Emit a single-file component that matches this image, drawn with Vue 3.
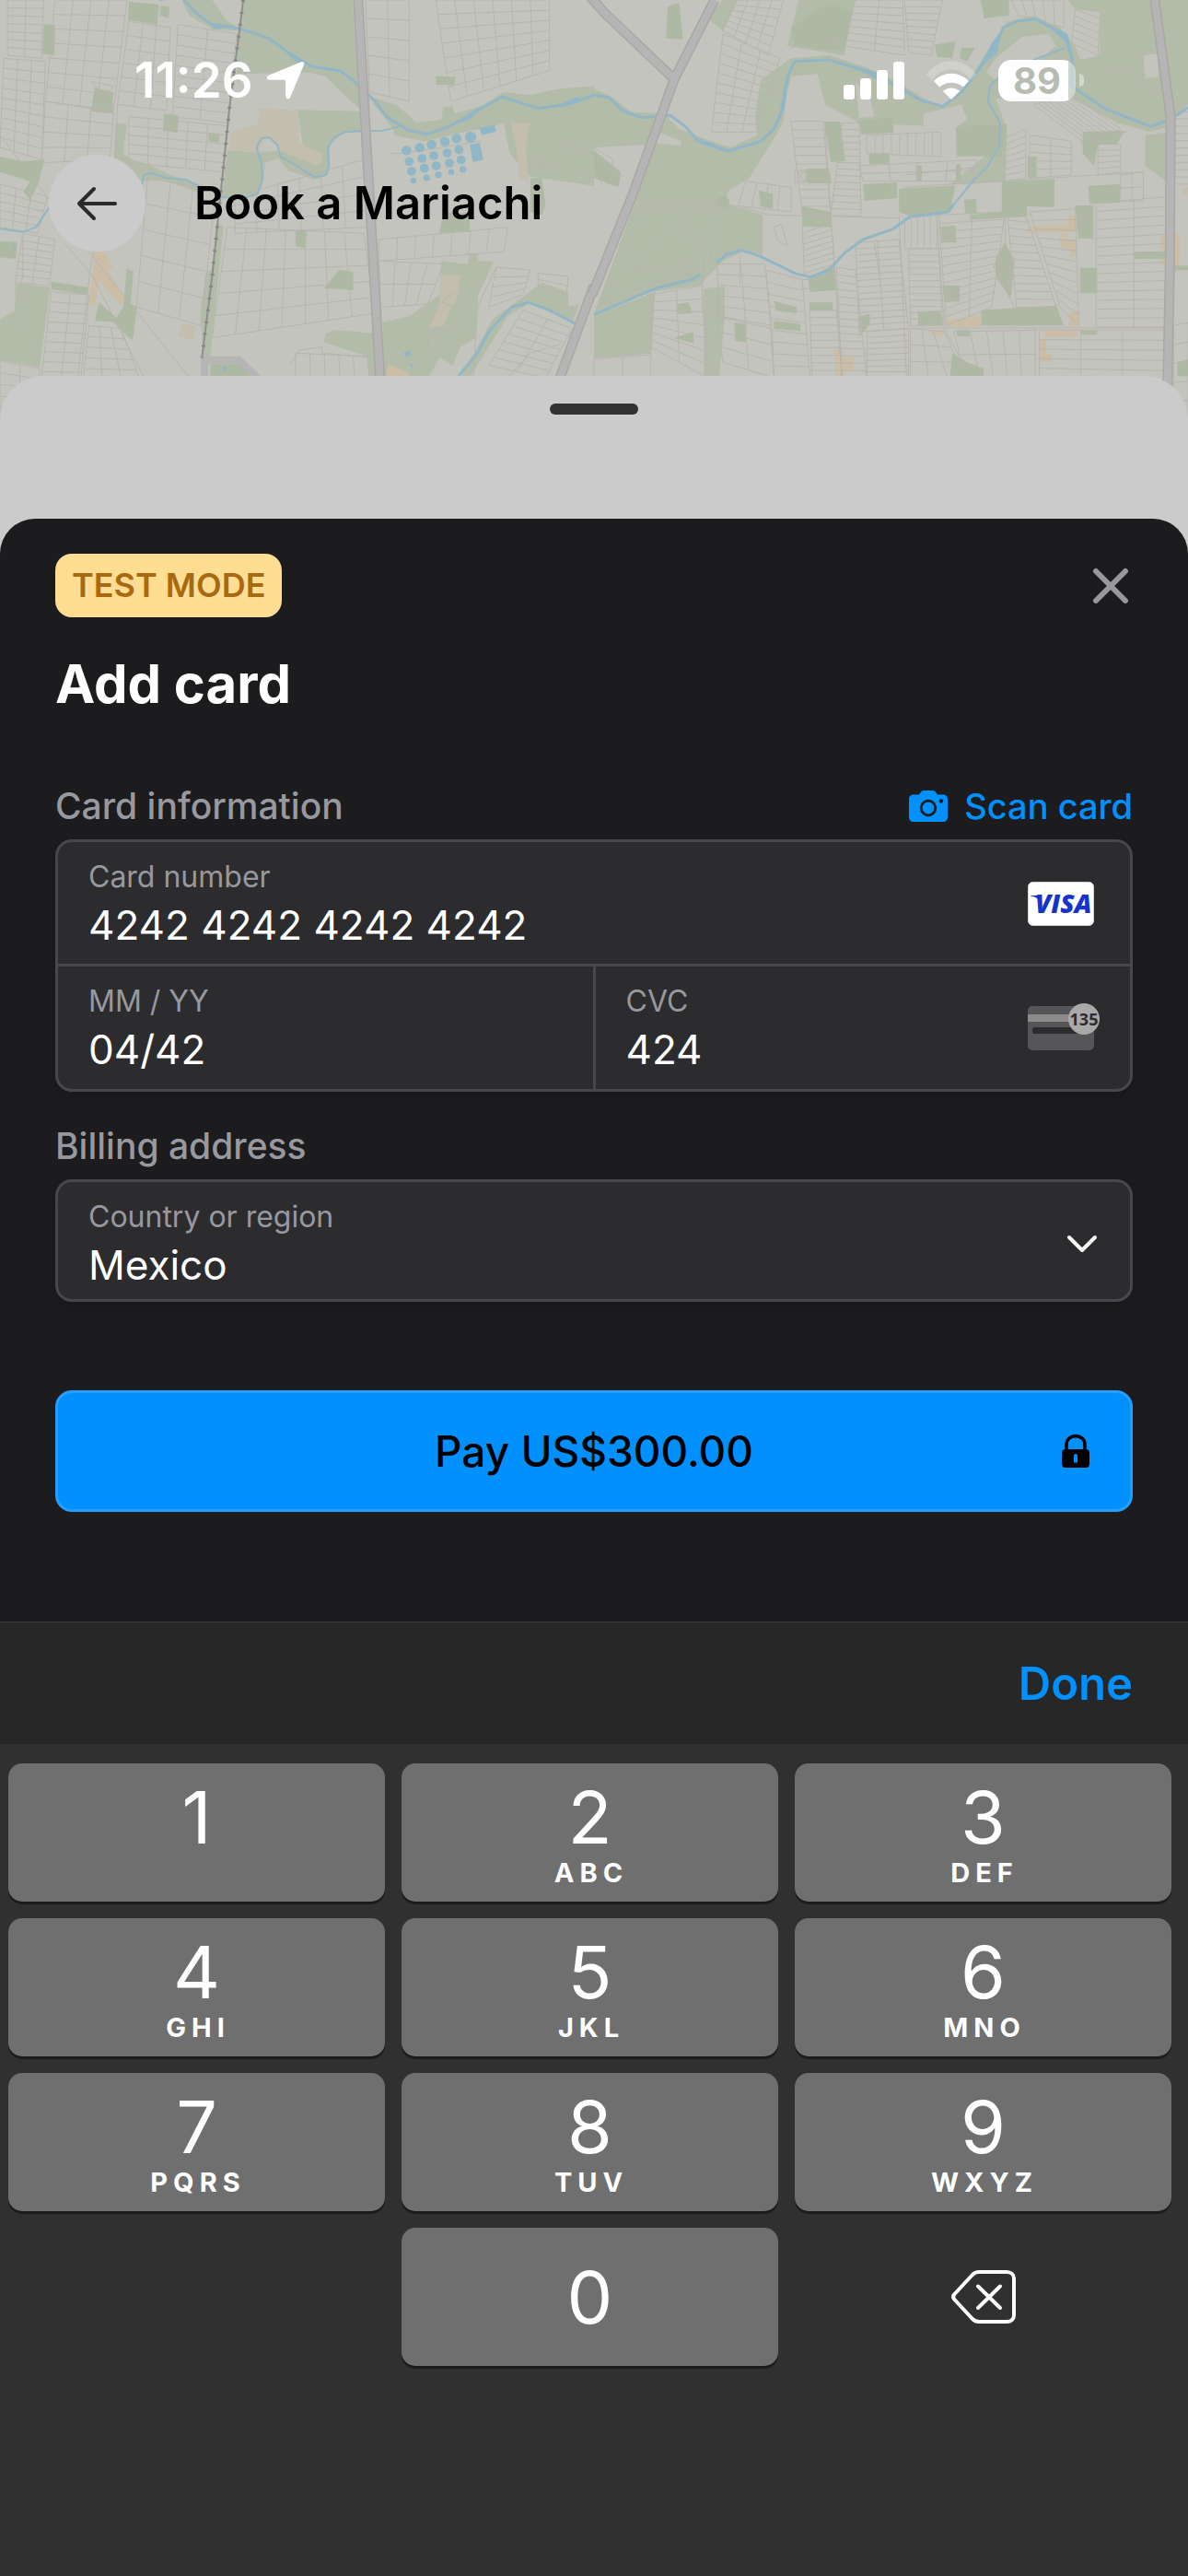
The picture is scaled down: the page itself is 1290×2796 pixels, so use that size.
<script setup>
import { ref } from 'vue'

const cardNumber = ref('4242 4242 4242 4242')
const expiry = ref('04/42')
const cvc = ref('424')
const country = ref('Mexico')

const keys = [
  { digit: '1', letters: '' },
  { digit: '2', letters: 'ABC' },
  { digit: '3', letters: 'DEF' },
  { digit: '4', letters: 'GHI' },
  { digit: '5', letters: 'JKL' },
  { digit: '6', letters: 'MNO' },
  { digit: '7', letters: 'PQRS' },
  { digit: '8', letters: 'TUV' },
  { digit: '9', letters: 'WXYZ' },
]

// Street grid of one district: corners [tl, tr, br, bl], columns, rows.
function grid([a, b, c, d], cols, rows) {
  const mix = (p, q, t) => [Math.round(p[0] + (q[0] - p[0]) * t), Math.round(p[1] + (q[1] - p[1]) * t)]
  let path = ''
  for (let i = 0; i <= cols; i++) {
    const t = cols ? i / cols : 0
    path += `M${mix(a, b, t)}L${mix(d, c, t)}`
  }
  for (let j = 0; j <= rows; j++) {
    path += `M${mix(a, d, j / rows)}L${mix(b, c, j / rows)}`
  }
  return path
}

const westStreets = [
  grid([[20, 0], [115, 0], [110, 190], [20, 180]], 2, 7),
  grid([[145, 0], [335, 0], [300, 360], [120, 330]], 4, 7),
  grid([[340, 70], [450, 90], [440, 360], [310, 340]], 3, 6),
  grid([[470, 80], [625, 110], [600, 400], [455, 380]], 2, 9),
  grid([[10, 190], [120, 200], [110, 520], [0, 480]], 3, 9),
  grid([[120, 330], [300, 365], [290, 520], [110, 530]], 3, 4),
  grid([[340, 380], [600, 410], [590, 560], [340, 530]], 5, 5),
  grid([[0, 600], [125, 640], [100, 760], [0, 740]], 3, 5),
  grid([[60, 760], [145, 780], [130, 930], [40, 920]], 2, 7),
  grid([[390, 580], [570, 620], [530, 1060], [360, 1000]], 3, 5),
  grid([[600, 740], [960, 760], [990, 1020], [560, 1100]], 7, 5),
  grid([[620, 640], [960, 520], [970, 740], [620, 760]], 6, 4),
  grid([[135, 950], [235, 960], [205, 1340], [100, 1340]], 2, 12),
  grid([[235, 1060], [320, 1070], [400, 1340], [210, 1340]], 3, 8),
  grid([[0, 1175], [105, 1200], [100, 1368], [0, 1368]], 2, 5),
  grid([[780, 1150], [970, 1160], [975, 1230], [780, 1230]], 5, 1),
  grid([[965, 0], [1080, 0], [1080, 330], [975, 300]], 2, 5),
  grid([[1150, 0], [1450, 0], [1450, 230], [1190, 330]], 6, 7),
  grid([[1000, 780], [1340, 740], [1330, 820], [1000, 850]], 7, 1),
  grid([[1000, 850], [1170, 860], [1130, 990], [1005, 1000]], 4, 2),
  grid([[1310, 870], [1400, 880], [1380, 960], [1290, 1000]], 1, 4),
  grid([[1420, 890], [1500, 900], [1495, 960], [1420, 930]], 1, 2),
  grid([[1380, 1010], [1510, 1070], [1440, 1230], [1290, 1190]], 2, 7),
].join('')

const eastStreets = [
  grid([[375, 0], [500, 0], [460, 180], [340, 100]], 4, 6),
  grid([[340, 110], [490, 190], [430, 430], [310, 430]], 3, 10),
  grid([[690, 0], [815, 0], [820, 180], [660, 150]], 2, 7),
  grid([[820, 0], [920, 0], [890, 180], [830, 170]], 1, 8),
  grid([[1100, 0], [1240, 0], [1240, 90], [1120, 50]], 5, 1),
  grid([[1270, 30], [1335, 60], [1330, 180], [1260, 140]], 1, 5),
  grid([[520, 395], [605, 395], [625, 700], [550, 700]], 1, 11),
  grid([[655, 400], [700, 400], [705, 705], [625, 700]], 1, 14),
  grid([[720, 440], [915, 430], [915, 510], [720, 500]], 9, 1),
  grid([[700, 540], [1010, 520], [1000, 590], [710, 590]], 4, 2),
  grid([[1085, 450], [1140, 420], [1140, 580], [1085, 590]], 1, 7),
  grid([[1160, 340], [1260, 310], [1390, 420], [1300, 470]], 8, 1),
  grid([[1150, 440], [1260, 460], [1260, 570], [1150, 580]], 2, 5),
  grid([[1330, 470], [1390, 470], [1390, 560], [1330, 570]], 1, 5),
  grid([[400, 590], [520, 610], [520, 690], [380, 670]], 4, 1),
  grid([[550, 740], [625, 710], [635, 860], [555, 890]], 1, 8),
  grid([[690, 790], [805, 780], [830, 1070], [700, 1080]], 2, 14),
  grid([[820, 710], [905, 700], [905, 810], [820, 810]], 5, 1),
  grid([[830, 810], [910, 810], [920, 1060], [835, 1060]], 1, 12),
  grid([[910, 700], [1085, 690], [1050, 1000], [930, 1060]], 2, 13),
  grid([[1090, 690], [1140, 700], [1220, 1000], [1115, 1000]], 1, 12),
  grid([[1150, 690], [1270, 680], [1280, 1060], [1230, 1000]], 1, 11),
  grid([[1325, 660], [1525, 640], [1525, 1065], [1325, 1065]], 2, 14),
  grid([[1390, 570], [1450, 560], [1450, 655], [1390, 655]], 2, 2),
  grid([[325, 860], [450, 860], [470, 1060], [330, 1030]], 2, 5),
  grid([[455, 880], [550, 910], [570, 1230], [475, 1230]], 1, 9),
  grid([[640, 870], [690, 880], [720, 1230], [655, 1230]], 1, 15),
  grid([[570, 1010], [640, 1010], [655, 1230], [575, 1230]], 1, 9),
  grid([[720, 1080], [830, 1070], [830, 1230], [720, 1230]], 1, 8),
  grid([[835, 1070], [925, 1080], [980, 1230], [835, 1230]], 3, 3),
  grid([[950, 1080], [1165, 1075], [1165, 1230], [980, 1230]], 5, 2),
  grid([[1175, 1075], [1505, 1075], [1505, 1240], [1175, 1230]], 3, 5),
  grid([[1530, 340], [1568, 340], [1568, 600], [1530, 600]], 0, 11),
  grid([[1530, 1060], [1568, 1050], [1568, 1368], [1530, 1368]], 1, 5),
  grid([[150, 960], [285, 930], [300, 1230], [150, 1130]], 2, 7),
  grid([[0, 1170], [150, 1155], [150, 1230], [0, 1230]], 2, 1),
  grid([[325, 1030], [470, 1070], [475, 1230], [340, 1180]], 2, 3),
].join('')

const tanks = [
  [1073, 490, 13], [1108, 481, 13], [1139, 471, 13], [1174, 461, 13], [1205, 451, 13], [1242, 447, 15],
  [1080, 526, 12], [1114, 516, 12], [1145, 507, 12], [1180, 498, 12], [1211, 488, 12],
  [1086, 558, 12], [1120, 548, 12], [1151, 540, 12], [1186, 531, 12], [1217, 521, 12],
  [1091, 588, 8], [1126, 579, 9], [1157, 569, 9], [1191, 560, 8], [1222, 551, 9],
]
</script>

<template>
  <main class="screen">
    <svg class="map" viewBox="0 0 1290 470" preserveAspectRatio="xMidYMin slice" aria-hidden="true">
      <rect width="1290" height="470" fill="#c4c4be" />
      <!-- west half -->
      <g transform="scale(0.4114 0.3333)">
        <g fill="#b2bca9">
          <path d="M640 0H930L945 275L955 360L900 300L860 250L820 236L625 240L630 100L560 95L500 50L480 0H560L600 70L632 90Z" />
          <path d="M785 358L950 362V428L905 432L872 470L866 570L830 585L760 555L735 515L700 530L695 590L670 642L585 645L600 490L680 497L740 490L835 537L852 500L800 480Z" />
          <path d="M970 310L1050 345L1100 400L1165 390L1170 350L1195 345L1200 370L1270 345L1330 300L1400 310L1470 290L1568 280V605L1400 575L1345 500L1330 402L1120 460L1040 440L1040 425Z" />
          <path d="M40 922L132 935L105 1195L0 1172V1040L40 1010Z" />
          <path d="M305 400L335 405L325 500L350 520L400 540L450 570L530 600L580 620L520 625L430 585L375 590L300 520Z" />
          <path d="M1010 1050L1080 1030L1160 960L1165 850L1235 860L1240 825L1262 825L1262 850L1303 852L1262 960L1255 1100L1215 1130L1195 1190L1160 1165L1130 1230H1010Z" />
          <path d="M885 1075L985 1085L990 1230H975L970 1160L855 1115L860 1085Z" />
          <path d="M575 730L590 735L555 1160L535 1160L530 1000L545 885L558 880Z" />
          <path d="M1430 920L1500 950L1500 1000L1530 990L1510 1050L1400 985L1340 1030L1280 1150L1240 1230H1215L1300 1040Z" />
        </g>
        <g fill="#adb9a3">
          <path d="M340 5L420 15L415 80L338 65Z" />
          <path d="M425 18L448 22L445 58L422 52Z" />
          <path d="M116 78L145 82L144 180L112 176Z" />
          <path d="M250 285L298 300V370L240 362Z" />
          <path d="M433 370L472 376L468 432L430 426Z" />
          <path d="M550 432L580 436L578 464L550 460Z" />
          <path d="M1151 248L1202 250L1200 277L1151 276Z" />
          <path d="M0 510L60 525L118 520L100 600L80 650L62 625L80 590L0 560Z" />
          <path d="M0 785L45 788L42 842L0 838Z" />
          <path d="M135 917L232 935L228 960L135 942Z" />
          <path d="M780 748L810 752L805 808L780 800Z" />
          <path d="M895 878L932 885V945L855 938Z" />
          <path d="M1170 690L1240 695V755L1160 760Z" />
          <path d="M1400 580L1430 580L1440 670L1430 700L1400 690Z" />
          <path d="M335 875L352 885L345 990L362 1000L350 1110L300 1050L325 1000Z" />
          <path d="M262 985L320 1050L250 1045Z" />
          <path d="M555 1185L640 1185L680 1230H555Z" />
          <path d="M0 1350L40 1330V1368H0Z" />
        </g>
        <g fill="#c3beae">
          <path d="M685 352L785 360L790 460L810 480L852 500L850 528L835 537L740 490L720 455L700 448L680 495L605 490L608 430L680 405Z" />
          <path d="M1348 397L1398 402L1388 480L1395 590L1370 580L1365 500Z" />
          <path d="M1165 895H1215L1210 960L1170 1060L1130 1070L1160 980Z" />
          <path d="M478 1052L518 1060L512 1105L472 1098Z" />
        </g>
        <g fill="#cbbda6">
          <path d="M250 820H275L300 875L285 880L330 975L318 992L262 915L250 995L232 990L245 890Z" />
          <path d="M1025 1185L1080 1215L1075 1230H1018Z" />
        </g>
        <path class="street" :d="westStreets" />
        <g class="street">
          <path d="M0 440L130 650L260 860L500 1230" />
          <path d="M170 790L245 900L380 1230" />
          <path d="M310 340L305 520L240 860L205 1230" />
          <path d="M60 760V900L40 1000L75 1080" />
          <path d="M1190 960L1210 950L1240 975L1235 1000L1200 1080L1195 1120L1165 1155L1130 1135L1128 1070L1165 985Z M1165 985L1235 1010M1128 1076H1202" />
          <path d="M1485 465L1520 470L1540 450M1500 490L1568 500M1410 500L1440 550L1400 520M1420 570L1470 540M1520 570L1568 580" />
          <path d="M240 265L300 280L270 320L300 350L250 345L275 310Z" />
          <path d="M765 1190L790 1140L850 1130V1150L900 1155L970 1165" />
          <path d="M1030 500H1060L1270 460" />
          <path d="M1250 1230L1260 1000L1310 870M1340 1230L1400 1150L1480 1120" />
        </g>
        <path class="river thin" d="M0 745L60 755L95 740L130 675M375 600L380 570L400 563L440 580L490 585L530 610M585 643L650 643L680 630L692 590L690 530L677 480L690 450L712 448L733 475L740 510L790 545L830 577L860 570L868 540L865 480L880 450L910 430L955 427L1010 425L1060 410" />
        <path class="river" d="M415 -5L430 0M485 0L520 45L570 90L600 85L650 100L710 125L760 170L820 215L900 232L940 270L990 330L1020 380L1080 425L1125 437L1180 415L1240 375L1325 315L1420 353L1500 340L1568 310" />
        <path class="river" d="M1210 1225L1260 1150L1290 1080L1350 1000L1395 985L1450 1010L1520 1055" />
        <path d="M500 20L535 62L570 92L590 78L560 75L530 50ZM730 140L770 175L820 215L780 200ZM1180 415L1270 345L1245 385ZM1470 345L1530 312L1520 335Z" fill="#91b6c6" />
        <g fill="#91b6c6">
          <ellipse v-for="([x, y, r], i) in tanks" :key="i" :cx="x" :cy="y" :rx="r" :ry="r * 1.2" />
          <path d="M1265 417L1305 407L1310 428L1272 440ZM1240 472L1266 465L1276 520L1248 528Z" />
          <path d="M1066 1148L1080 1140L1083 1158L1070 1162ZM1080 1182L1092 1190L1088 1200ZM585 1195H598L595 1212ZM34 802L40 800L38 820Z" />
        </g>
        <path class="road-edge" d="M945 0L965 420L990 950L1003 1230M1568 930L1478 1230" />
        <path class="road" d="M945 0L965 420L990 950L1003 1230M1568 930L1478 1230" />
        <path class="road" d="M540 1230V1172H630L680 1230" />
        <path class="rail" d="M642 0L605 360L585 600L560 900L533 1165" />
        <path class="rail-ties" d="M642 0L605 360L585 600L560 900L533 1165" />
      </g>
      <!-- east half -->
      <g transform="translate(645 0) scale(0.4114 0.3333)">
        <g fill="#b2bca9">
          <path d="M0 290L40 310L100 365L185 370L225 420L300 455L360 480L430 440L425 380L440 260L520 190L620 180L720 220L800 265L870 320L920 345L970 300L1000 240L1060 130L1090 70L1160 50L1230 90L1270 150L1300 250L1400 360L1470 400L1520 385V410L1470 430L1380 400L1260 320L1200 310L1060 320L1090 420L1085 590L990 600L940 600L1040 500L960 410L985 390L970 340L870 370V410L700 400L610 340L590 240L520 250L500 395L480 440L410 580L355 620L345 660L445 700V830L400 815L340 850L300 900L280 930L150 950L0 1020L120 620L160 470L0 480Z" />
          <path d="M1250 0H1480L1520 380L1470 410L1350 360L1270 280L1265 200L1335 180V40L1270 30Z" />
          <path d="M1485 0H1568V340L1530 380Z" />
          <path d="M300 60L340 0H380L340 100Z" />
          <path d="M0 1030L160 950L150 1150L0 1165Z" />
          <path d="M540 0H690L660 180L510 150Z" />
          <path d="M1455 440L1520 430L1510 590L1455 540Z" />
          <path d="M290 940L345 932V1030L330 1230H290Z" />
        </g>
        <g fill="#c4c4be">
          <path d="M0 580L80 620L70 700L0 920Z" />
          <path d="M1060 190L1130 120L1200 110L1220 150L1170 200L1060 260L1035 235Z" />
          <path d="M1450 180L1488 175L1490 250L1455 255Z" />
          <path d="M530 260L590 240L610 390H500L510 290Z" />
          <path d="M170 430L230 460V475L160 465Z" />
          <path d="M690 270L725 300L740 380L700 385Z" />
        </g>
        <g fill="#adb9a3">
          <path d="M195 20L225 10L235 128L190 125Z" />
          <path d="M520 90L620 10L680 40L660 165L530 150Z" />
          <path d="M1020 0H1095V50L1030 60Z" />
          <path d="M900 145L955 135L945 190L905 185Z" />
          <path d="M970 155H1005L985 200L965 190Z" />
          <path d="M955 412L1090 405L1075 508L957 510Z" />
          <path d="M608 395L650 397L663 525L625 528Z" />
          <path d="M700 395L790 380V432L705 438Z" />
          <path d="M725 500L780 497V533L727 535Z" />
          <path d="M560 550L620 548L628 598L562 596Z" />
          <path d="M710 600L800 594V645L714 654Z" />
          <path d="M805 615L953 604L940 690L835 705L805 690Z" />
          <path d="M1145 510H1168V580H1145ZM850 540H865V590H850ZM955 535H968V584H955Z" />
          <path d="M1076 592L1215 583V675L1143 672V705L992 716V700L1076 690Z" />
          <path d="M1305 605L1388 600V660L1308 664Z" />
          <path d="M1270 670L1318 668V778L1278 776Z" />
          <path d="M977 650L1008 647L1010 692L980 696Z" />
          <path d="M435 620L472 630V680L440 672Z" />
          <path d="M550 672L625 690V740L550 738Z" />
          <path d="M1085 790L1110 850L1100 970L1060 900L1060 840Z" />
          <path d="M1423 820L1520 818V842L1425 844Z" />
          <path d="M1283 872H1328V955H1283Z" />
          <path d="M855 1015L915 1010L920 1060H855Z" />
          <path d="M1022 1010L1110 1003L1220 995L1240 1060H1022Z" />
          <path d="M920 930L965 930V980L925 985Z" />
          <path d="M915 738L955 735V790L918 790Z" />
          <path d="M565 905L635 860L640 945L570 950ZM568 985H630V1012H568Z" />
          <path d="M370 1050L403 1055L400 1115L372 1110ZM475 980L535 1000V1020L480 1012ZM475 1045L545 1055V1078L475 1070Z" />
          <path d="M700 1030L728 1022V1055L705 1090ZM210 1100L262 1080L265 1118ZM218 990L250 985L258 1020L218 1022Z" />
          <path d="M945 1150L985 1180L1028 1200V1230H940ZM958 1075H992V1095H958ZM1285 1075H1328V1090H1285Z" />
          <path d="M1290 430L1400 425L1380 470L1330 470L1320 540L1290 500Z" />
          <path d="M0 490L70 560L65 610L0 580Z" />
          <ellipse cx="341" cy="658" rx="16" ry="19" />
          <path d="M1530 865H1568V880H1530ZM1540 1180L1568 1170V1225H1540Z" />
        </g>
        <g fill="#cbbda6">
          <path d="M1145 738L1250 730V702H1272V755L1145 758ZM1228 760L1248 762V780H1276V835H1256V808H1230Z" />
          <path d="M930 1042L1020 1028V1063H932ZM886 1075H924L920 1096L890 1092ZM1256 1015H1280V1063H1254Z" />
          <path d="M1185 1075H1275V1098H1188ZM1174 1104H1194V1152H1208V1176H1174ZM1496 762H1545V862H1496V845H1510V812H1496Z" />
          <path d="M635 1138H655V1162H686V1208H660V1230H638ZM1556 610H1568V635H1556Z" />
        </g>
        <path class="street" :d="eastStreets" />
        <g class="street">
          <path d="M115 690L320 680M115 690L75 870L50 900L20 1000M240 705L105 860L110 885L180 880L260 885L268 870L220 845M240 705L290 830L285 1000L315 1230M220 740L270 800" />
          <path d="M600 60L650 170M520 160L655 45M570 100L660 150M550 130L640 120" />
          <path d="M1125 1000L1245 1063M1225 990L1160 1063M925 930L965 985M965 930L925 985M915 738L958 788M950 735L915 788" />
          <path d="M1272 672L1318 755M1318 672L1272 755M1060 840H1105M1062 870H1108M1065 900H1110M1075 930H1108M1075 835V920M1092 835V960" />
          <path d="M0 480L50 520L40 600L0 570M10 520L80 575M20 545V600" />
          <path d="M0 1000L160 920L260 890M0 1165L150 1150L160 950" />
          <path d="M530 555H558V595H530ZM535 560L555 590M555 560L535 590M475 740L495 730L510 800L485 785Z" />
          <path d="M1345 232L1430 240L1440 280H1490M1285 460L1320 530M1300 440L1330 470L1410 425" />
          <path d="M345 680L380 670L460 700L800 710M610 400L625 700L655 1230M805 700L825 1230M905 705L925 1070L995 1230M1085 690L1085 790L1055 870L1110 1000L1120 1063" />
          <path d="M820 610L1000 595L1140 585L1450 560M835 1068H1510M1165 1070V1230M820 570L1010 545" />
          <path d="M550 910H605V940H550ZM740 790L760 950M385 830V925M700 1030V1100M885 1015V1060M120 650L250 670L345 655M335 680L305 850" />
        </g>
        <path class="river" d="M0 310L40 318L75 360L125 383L200 375L240 410L275 460L355 492L440 460L475 420L500 350L510 250L530 200L620 195L700 225L800 280L860 325L920 347L970 300L1020 220L1060 150L1080 90L1120 68L1165 62L1215 95L1245 130L1262 190L1260 280L1350 355L1470 412L1520 390L1568 350" />
        <path class="river" d="M0 1025L160 940L260 910L282 893M323 857L350 828L390 815L440 835L530 890L570 902L620 880L660 825L710 780L790 745L835 705L935 690L950 665" />
        <path class="river thin" d="M950 665L1000 590L1040 540L1070 470L1072 400L1040 330L1045 280L1080 240L1170 190L1245 155" />
        <path d="M690 215L760 240L800 285L740 255ZM1010 230L1050 140L1075 100L1065 170ZM1180 68L1250 110L1262 170L1240 130ZM275 450L320 470L360 495L310 480ZM500 290L515 250L505 330L490 370Z" fill="#91b6c6" />
        <path class="road-edge" d="M-10 -10L30 45L212 258M318 0L212 258L100 640L-5 960M1480 0L1522 380L1520 860L1512 1368" />
        <path class="road" d="M-10 -10L30 45L212 258M318 0L212 258L100 640L-5 960M1480 0L1522 380L1520 860L1512 1368" />
      </g>
    </svg>

    <header class="top">
      <div class="status">
        <div class="clock">
          <span>11:26</span>
          <svg width="42" height="42" viewBox="0 0 42 42" aria-hidden="true">
            <path d="M38 1.2C40.4 0.2 42 1.8 41 4.2L26.2 39.4C25 42.2 21.2 41.6 21.2 38.6V22.6C21.2 21.4 20.6 20.8 19.4 20.8H3.4C0.4 20.8 -0.2 17 2.6 15.8Z" fill="#fff" />
          </svg>
        </div>
        <div class="indicators">
          <svg width="66" height="42" viewBox="0 0 66 42" fill="#fff" aria-label="Signal">
            <rect x="0" y="26" width="12" height="16" rx="3" />
            <rect x="18" y="19" width="12" height="23" rx="3" />
            <rect x="36" y="10" width="12" height="32" rx="3" />
            <rect x="54" y="1" width="12" height="41" rx="3" />
          </svg>
          <svg width="56" height="42" viewBox="0 0 56 42" fill="#fff" aria-label="Wi-Fi">
            <path d="M1 15A32 32 0 0 1 55 15L49 21A25 25 0 0 0 7 21Z" opacity="0.22" />
            <path d="M9 22A26 26 0 0 1 47 22L41 28.500A20 20 0 0 0 15 28.500Z" />
            <path d="M19 33A13 13 0 0 1 37 33L28 42Z" />
          </svg>
          <div class="battery">
            <span class="level">89</span>
            <span class="nub"></span>
          </div>
        </div>
      </div>
      <nav class="nav">
        <button class="back" type="button" aria-label="Back">
          <svg width="46" height="46" viewBox="0 0 46 46" aria-hidden="true">
            <path d="M42 23H3M19 7L3 23L19 39" fill="none" stroke="#2b2b2b" stroke-width="4" stroke-linecap="round" stroke-linejoin="round" />
          </svg>
        </button>
        <h1>Book a Mariachi</h1>
      </nav>
    </header>

    <div class="under-sheet"><span class="handle"></span></div>

    <form class="sheet" @submit.prevent>
      <div class="sheet-top">
        <span class="badge">TEST MODE</span>
        <button class="close" type="button" aria-label="Close">
          <svg width="40" height="40" viewBox="0 0 40 40" aria-hidden="true">
            <path d="M4 4L36 36M36 4L4 36" stroke="#98989f" stroke-width="6" stroke-linecap="round" />
          </svg>
        </button>
      </div>
      <h2>Add card</h2>

      <div class="section-head">
        <h3>Card information</h3>
        <button class="scan" type="button">
          <svg width="42" height="34" viewBox="0 0 42 34" aria-hidden="true">
            <path d="M5 4.500H10.500C12 4.500 12.800 0 16 0H26C29.200 0 30 4.500 31.500 4.500H37C40 4.500 42 6.500 42 9.500V29C42 32 40 34 37 34H5C2 34 0 32 0 29V9.500C0 6.500 2 4.500 5 4.500Z" fill="#0091ff" />
            <circle cx="21" cy="19" r="7.800" fill="#0091ff" stroke="#1c1c1e" stroke-width="2.800" />
            <circle cx="35" cy="11.500" r="2.200" fill="#1c1c1e" />
          </svg>
          <span>Scan card</span>
        </button>
      </div>
      <div class="box">
        <div class="cell">
          <div class="field">
            <label for="number">Card number</label>
            <input id="number" v-model="cardNumber" inputmode="numeric" />
          </div>
          <svg width="78" height="48" viewBox="0 0 78 48" aria-label="Visa">
            <rect x="0.500" y="0.500" width="71" height="47" rx="5" fill="#fff" stroke="#d6d6d6" />
            <text x="8" y="34" class="visa">VISA</text>
            <path d="M3 15H14L13 22C11 18 8 16 3 15.500Z" fill="#1434cb" />
          </svg>
        </div>
        <div class="split">
          <div class="cell">
            <div class="field">
              <label for="expiry">MM / YY</label>
              <input id="expiry" v-model="expiry" inputmode="numeric" />
            </div>
          </div>
          <div class="cell">
            <div class="field">
              <label for="cvc">CVC</label>
              <input id="cvc" v-model="cvc" inputmode="numeric" />
            </div>
            <svg width="78" height="54" viewBox="0 -3 78 54" aria-hidden="true">
              <rect width="72" height="48" rx="5" fill="#565658" />
              <rect y="9" width="72" height="8" fill="#8b8b8b" />
              <rect x="5" y="23" width="56" height="7" rx="2" fill="#2c2c2e" />
              <circle cx="61" cy="14" r="17" fill="#a9a9a9" />
              <text x="61" y="21" class="digits">135</text>
            </svg>
          </div>
        </div>
      </div>

      <div class="section-head">
        <h3>Billing address</h3>
      </div>
      <div class="box">
        <div class="cell country">
          <div class="field">
            <label for="country">Country or region</label>
            <select id="country" v-model="country">
              <option>Mexico</option>
              <option>United States</option>
            </select>
          </div>
          <svg width="36" height="20" viewBox="0 0 36 20" aria-hidden="true">
            <path d="M3 3L17 17L31 3" fill="none" stroke="#fff" stroke-width="4" stroke-linecap="round" stroke-linejoin="round" />
          </svg>
        </div>
      </div>

      <button class="pay" type="submit">
        <span>Pay US$300.00</span>
        <svg width="30" height="36" viewBox="0 0 30 36" aria-hidden="true">
          <path d="M5 18V11C5 -1.500 25 -1.500 25 11V18" fill="none" stroke="#000" stroke-width="3.600" />
          <path d="M4 16H26C28.500 16 30 17.500 30 20V32C30 34.500 28.500 36 26 36H4C1.500 36 0 34.500 0 32V20C0 17.500 1.500 16 4 16Z" />
          <rect x="13" y="21" width="4" height="10" rx="2" fill="#0091ff" />
        </svg>
      </button>
    </form>

    <section class="keyboard" aria-label="Keypad">
      <div class="toolbar"><button type="button">Done</button></div>
      <div class="keys">
        <button v-for="key in keys" :key="key.digit" class="key" type="button">
          <span class="digit">{{ key.digit }}</span>
          <span v-if="key.letters" class="letters">{{ key.letters }}</span>
        </button>
        <span></span>
        <button class="key zero" type="button"><span class="digit">0</span></button>
        <button class="delete" type="button" aria-label="Delete">
          <svg width="70" height="60" viewBox="0 0 70 60" fill="none" stroke="#fff" stroke-width="4" stroke-linecap="round" stroke-linejoin="round" aria-hidden="true">
            <path d="M30 3H60C65 3 68 6 68 10V50C68 54 65 57 60 57H30C27 57 25 56 23 54L3.500 33C1.500 31 1.500 29 3.500 27L23 6C25 4 27 3 30 3Z" />
            <path d="M29 18.500L53 42M53 18.500L29 42" />
          </svg>
        </button>
      </div>
    </section>
  </main>
</template>

<style>
body {
  margin: 0;
  background: #303030;
}
</style>

<style scoped>
.screen {
  position: relative;
  display: flex;
  flex-direction: column;
  min-height: 100vh;
  overflow: hidden;
  font-family: Inter, "Liberation Sans", sans-serif;
  color: #fff;
}

button,
input,
select {
  margin: 0;
  padding: 0;
  border: 0;
  border-radius: 0;
  background: none;
  color: inherit;
  font: inherit;
  appearance: none;
}

h1,
h2,
h3 {
  margin: 0;
}

svg {
  display: block;
  flex: none;
}

/* Map */
.map {
  position: absolute;
  top: 0;
  left: 0;
  width: 100%;
  height: 470px;
}

.map path {
  vector-effect: non-scaling-stroke;
}

.street {
  fill: none;
  stroke: #b8b4af;
  stroke-width: 1;
}

.river {
  fill: none;
  stroke: #91b6c6;
  stroke-width: 3;
  stroke-linejoin: round;
}

.river.thin {
  stroke-width: 2;
}

.road-edge {
  fill: none;
  stroke: #aba7a3;
  stroke-width: 11;
}

.road {
  fill: none;
  stroke: #b5b5b5;
  stroke-width: 8;
}

.rail {
  fill: none;
  stroke: #8f8f8d;
  stroke-width: 2;
}

.rail-ties {
  fill: none;
  stroke: #868684;
  stroke-width: 4;
  stroke-dasharray: 2 11;
}

/* Header */
.top {
  position: relative;
  padding: 56px 0 135px;
}

.status {
  display: flex;
  justify-content: space-between;
  align-items: center;
  height: 62px;
  padding: 0 113px 0 146px;
}

.clock {
  display: flex;
  align-items: center;
  gap: 14px;
  font-size: 53px;
  line-height: 62px;
  font-weight: 600;
}

.indicators {
  display: flex;
  align-items: center;
  gap: 23px;
}

.battery {
  display: flex;
  align-items: center;
  gap: 4px;
}

.level {
  width: 84px;
  border-radius: 14px;
  background: linear-gradient(90deg, #fff 76px, rgba(255, 255, 255, 0.4) 76px);
  color: #b8bcb0;
  font-size: 40px;
  line-height: 45px;
  font-weight: 700;
  text-align: center;
}

.nub {
  width: 5px;
  height: 14px;
  border-radius: 0 5px 5px 0;
  background: rgba(255, 255, 255, 0.4);
}

.nav {
  display: flex;
  align-items: center;
  gap: 53px;
  margin-top: 50px;
  padding-left: 53px;
}

.back {
  display: grid;
  place-items: center;
  width: 105px;
  height: 105px;
  border-radius: 50%;
  background: #cbcbcb;
}

.nav h1 {
  color: #000;
  font-size: 49px;
  line-height: 60px;
  font-weight: 600;
}

/* Sheets */
.under-sheet {
  position: relative;
  display: flex;
  justify-content: center;
  padding: 30px 0 161px;
  border-radius: 48px 48px 0 0;
  background: #cbcbcb;
}

.handle {
  width: 96px;
  height: 12px;
  border-radius: 6px;
  background: #323232;
}

.sheet {
  position: relative;
  margin-top: -48px;
  padding: 38px 60px 119px;
  border-radius: 38px 38px 0 0;
  background: #1c1c1e;
}

.sheet-top {
  display: flex;
  justify-content: space-between;
  align-items: center;
  padding-right: 4px;
}

.badge {
  padding: 0 18px;
  border-radius: 18px;
  background: #ffdd93;
  color: #a86a10;
  font-size: 36px;
  line-height: 69px;
  font-weight: 600;
}

.sheet h2 {
  margin-top: 36px;
  font-size: 58px;
  line-height: 72px;
  font-weight: 700;
}

.section-head {
  display: flex;
  justify-content: space-between;
  align-items: center;
  margin: 35px 0 12px;
  font-size: 38px;
  line-height: 48px;
}

h2 + .section-head {
  margin-top: 73px;
}

.section-head h3 {
  color: #98989f;
  font-size: 39px;
  font-weight: 500;
}

.scan {
  display: flex;
  align-items: center;
  gap: 18px;
  color: #0091ff;
  font-weight: 500;
}

.box {
  border: 3px solid #48484a;
  border-radius: 18px;
  background: #2c2c2e;
  box-shadow: 0 6px 12px rgba(0, 0, 0, 0.12);
}

.cell {
  display: flex;
  flex: 1;
  min-width: 0;
  justify-content: space-between;
  align-items: center;
  padding: 18px 33px 10px 33px;
}

.cell > svg {
  margin-bottom: 6px;
}

.cell.country {
  padding-bottom: 5px;
}

.split {
  display: flex;
  border-top: 3px solid #48484a;
}

.split .cell {
  padding-bottom: 11px;
}

.split .cell + .cell {
  border-left: 3px solid #48484a;
}

.field {
  display: flex;
  flex: 1;
  min-width: 0;
  flex-direction: column;
}

.field label {
  color: #98989f;
  font-size: 32px;
  line-height: 40px;
}

.field input,
.field select {
  width: 100%;
  height: 64px;
  font-size: 44px;
  line-height: 64px;
  outline: none;
}

.visa {
  fill: #1434cb;
  font-family: "Open Sans", sans-serif;
  font-size: 28px;
  font-weight: 800;
  font-style: italic;
}

.digits {
  fill: #2c2c2e;
  font-family: "Open Sans", sans-serif;
  font-size: 18px;
  font-weight: 700;
  text-anchor: middle;
}

.pay {
  display: grid;
  grid-template-columns: 1fr auto 1fr;
  align-items: center;
  width: 100%;
  height: 132px;
  margin-top: 96px;
  padding: 0 44px;
  border: 3px solid #269dff;
  border-radius: 18px;
  background: #0091ff;
  color: #000;
  font-size: 46px;
  font-weight: 500;
}

.pay span {
  grid-column: 2;
}

.pay svg {
  justify-self: end;
}

/* Keyboard */
.keyboard {
  position: relative;
  flex: 1;
  background: #303030;
}

.toolbar {
  display: flex;
  justify-content: flex-end;
  align-items: center;
  height: 132px;
  padding: 0 60px;
  border-top: 1px solid #3a3a3c;
  background: #272727;
  color: #0091ff;
  font-size: 49px;
  font-weight: 600;
}

.keys {
  display: grid;
  grid-template-columns: repeat(3, 1fr);
  grid-auto-rows: 150px;
  gap: 18px;
  padding: 21px 18px 18px 9px;
}

.key {
  display: flex;
  flex-direction: column;
  align-items: center;
  gap: 5px;
  padding-top: 18px;
  border-radius: 15px;
  background: #6f6f6f;
  box-shadow: 0 3px 0 #1b1b1b;
}

.digit {
  font-size: 79px;
  line-height: 80px;
}

.letters {
  padding-left: 3px;
  font-size: 29px;
  line-height: 32px;
  font-weight: 700;
  letter-spacing: 6px;
}

.key.zero {
  justify-content: center;
  padding-top: 0;
}

.delete {
  display: grid;
  place-items: center;
}
</style>
